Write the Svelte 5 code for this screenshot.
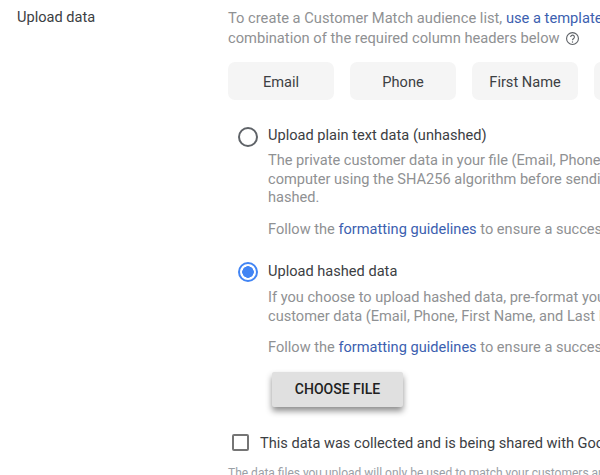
<script>
  const headers = ["Email", "Phone", "First Name", "Last Name"];
</script>

<div class="page">
  <div class="label">Upload data</div>
  <div class="content">
    <p class="intro">
      To create a Customer Match audience list, <a href="#t">use a template</a> or make sure your file has a<br />
      combination of the required column headers below
      <svg class="help" viewBox="0 0 24 24" width="15" height="15">
        <circle cx="12" cy="12" r="9.5" fill="none" stroke="#5f6368" stroke-width="1.8" />
        <path d="M9 9.6a3 3 0 1 1 4.8 2.4c-1.1.8-1.8 1.4-1.8 2.8" fill="none" stroke="#5f6368" stroke-width="1.8" />
        <circle cx="12" cy="17.6" r="1.1" fill="#5f6368" />
      </svg>
    </p>

    <div class="chips">
      {#each headers as h}
        <div class="chip">{h}</div>
      {/each}
    </div>

    <div class="option first">
      <span class="radio"></span>
      <div class="body">
        <div class="title">Upload plain text data (unhashed)</div>
        <p class="desc">
          The private customer data in your file (Email, Phone, First Name, and Last Name) will be hashed on your<br />
          computer using the SHA256 algorithm before sending it to Google. Data that is already hashed will stay<br />
          hashed.
        </p>
        <p class="desc follow">Follow the <a href="#f">formatting guidelines</a> to ensure a successful upload of your data.</p>
      </div>
    </div>

    <div class="option second">
      <span class="radio on"></span>
      <div class="body">
        <div class="title">Upload hashed data</div>
        <p class="desc lower">
          If you choose to upload hashed data, pre-format your file using the SHA256 algorithm. All of your<br />
          customer data (Email, Phone, First Name, and Last Name) must be hashed before you upload it.
        </p>
        <p class="desc follow">Follow the <a href="#f">formatting guidelines</a> to ensure a successful upload of your data.</p>
        <button class="file">CHOOSE FILE</button>
      </div>
    </div>

    <div class="consent">
      <span class="box"></span>
      <span>This data was collected and is being shared with Google in compliance with our policies</span>
    </div>
    <p class="note">The data files you upload will only be used to match your customers and will be deleted afterward</p>
  </div>
</div>

<style>
  :global(body) {
    margin: 0;
    background: #fff;
  }
  .page {
    display: flex;
    width: 600px;
    height: 475px;
    overflow: hidden;
    font-family: Roboto, "Liberation Sans", sans-serif;
    font-size: 14.6px;
    color: #3c4043;
  }
  .label {
    flex: none;
    width: 211px;
    padding: 8px 0 0 17px;
    line-height: 18px;
  }
  .content {
    flex: none;
    width: 700px;
    padding-top: 8px;
  }
  p {
    margin: 0;
    white-space: nowrap;
  }
  a {
    color: #3c5fb0;
    text-decoration: none;
  }
  .intro {
    font-size: 14.7px;
    color: #8f9193;
    line-height: 20px;
  }
  .help {
    vertical-align: -3px;
    margin-left: 2px;
  }
  .chips {
    display: flex;
    gap: 16px;
    margin-top: 14px;
  }
  .chip {
    width: 106px;
    height: 38px;
    line-height: 40px;
    text-align: center;
    background: #f5f5f5;
    border-radius: 7px;
  }
  .option {
    display: flex;
    gap: 10px;
    margin-left: 10px;
  }
  .first {
    margin-top: 25px;
  }
  .second {
    margin-top: 23px;
  }
  .radio {
    flex: none;
    box-sizing: border-box;
    width: 20px;
    height: 20px;
    margin-top: 2px;
    border: 2px solid #5f6368;
    border-radius: 50%;
  }
  .radio.on {
    margin-top: 1px;
    border-color: #4285f4;
    background: radial-gradient(circle, #4285f4 0 5.5px, transparent 6px);
  }
  .title {
    line-height: 20px;
    white-space: nowrap;
  }
  .desc {
    margin-top: 6px;
    color: #8f9193;
    line-height: 18.5px;
  }
  .desc.lower {
    margin-top: 7px;
  }
  .follow {
    margin-top: 13px;
  }
  .file {
    display: block;
    width: 131px;
    height: 35px;
    margin: 15px 0 0 4px;
    border: 0;
    border-radius: 2px;
    background: #e0e0e0;
    color: #212121;
    font: 500 14px Roboto, sans-serif;
    box-shadow: 0 4px 6px rgba(0, 0, 0, 0.45);
  }
  .consent {
    display: flex;
    align-items: center;
    gap: 11px;
    margin: 26px 0 0 4px;
    line-height: 20px;
    white-space: nowrap;
  }
  .box {
    flex: none;
    box-sizing: border-box;
    width: 17px;
    height: 17px;
    border: 2px solid #757575;
    border-radius: 2px;
  }
  .note {
    margin-top: 13px;
    font-size: 12px;
    color: #9aa0a6;
  }
</style>
